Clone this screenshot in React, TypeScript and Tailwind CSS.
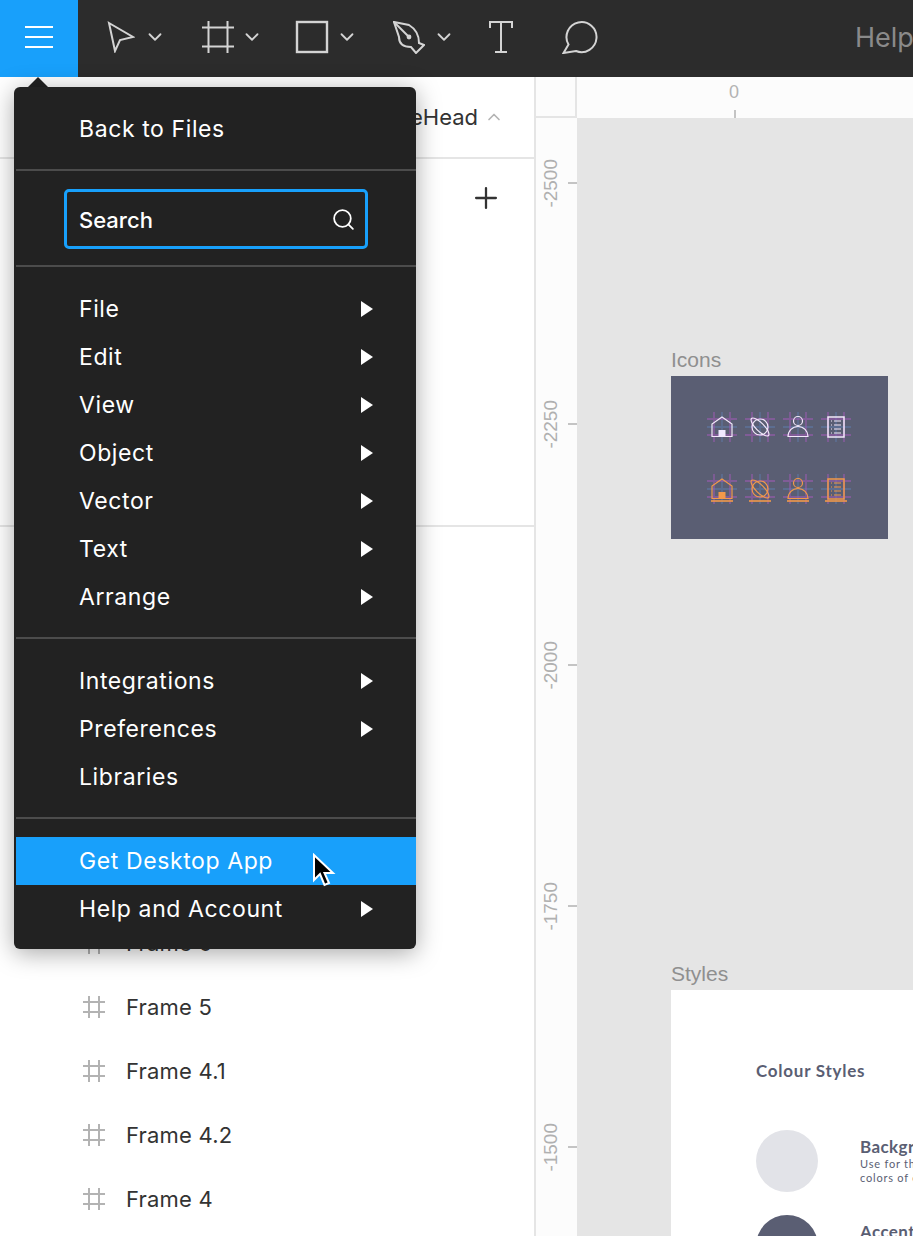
import { Search, Plus, ChevronUp, ChevronDown } from "lucide-react";

const menuGroups = [
  [
    { label: "File", sub: true },
    { label: "Edit", sub: true },
    { label: "View", sub: true },
    { label: "Object", sub: true },
    { label: "Vector", sub: true },
    { label: "Text", sub: true },
    { label: "Arrange", sub: true },
  ],
  [
    { label: "Integrations", sub: true },
    { label: "Preferences", sub: true },
    { label: "Libraries", sub: false },
  ],
];

const frames = ["Frame 6", "Frame 5", "Frame 4.1", "Frame 4.2", "Frame 4"];
const rulerMarks = ["-2500", "-2250", "-2000", "-1750", "-1500"];

const Caret = () => (
  <svg width="12" height="16" viewBox="0 0 12 16" className="shrink-0">
    <polygon points="0,0 12,8 0,16" fill="#fff" />
  </svg>
);

const Chevron = ({ className }: { className: string }) => (
  <ChevronDown className={className} size={22} strokeWidth={2} color="#d4d4d4" />
);

const MenuRow = ({ label, sub, active }: { label: string; sub?: boolean; active?: boolean }) => (
  <div className={`flex h-12 items-center justify-between pl-[63px] pr-[43px] ${active ? "bg-[#18a0fb]" : ""}`}>
    <span>{label}</span>
    {sub && <Caret />}
  </div>
);

const Divider = () => <div className="h-[2px] bg-[#4c4c4c]" />;

const HashIcon = () => (
  <svg width="24" height="24" viewBox="0 0 24 24" fill="none" stroke="#b3b3b3" strokeWidth="2" className="shrink-0">
    <path d="M7 1v22M17 1v22M1 7h22M1 17h22" />
  </svg>
);

// small grid of purple/blue keylines behind each sample icon
const Keylines = ({ cx, cy }: { cx: number; cy: number }) => (
  <g strokeWidth="1.8">
    <path d={`M${cx - 15} ${cy}h30M${cx} ${cy - 15}v30`} stroke="#5f7aa8" opacity="0.55" />
    <path
      d={`M${cx - 15} ${cy - 8}h30M${cx - 15} ${cy + 8}h30M${cx - 8} ${cy - 15}v30M${cx + 8} ${cy - 15}v30`}
      stroke="#a05bb5"
      opacity="0.55"
    />
  </g>
);

const SampleIcons = ({ cy, color, fill, underline }: { cy: number; color: string; fill: string; underline?: boolean }) => (
  <g>
    {[51, 89, 127, 165].map((cx) => (
      <Keylines key={cx} cx={cx} cy={cy} />
    ))}
    <g fill="none" stroke={color} strokeWidth="1.2">
      <path d={`M41 ${cy + 9.5}V${cy - 3}L51 ${cy - 10}L61 ${cy - 3}V${cy + 9.5}Z`} />
      <rect x="47.5" y={cy + 3} width="7" height="6.5" fill={fill} stroke="none" />
      <circle cx="89" cy={cy} r="8" />
      <ellipse cx="89" cy={cy} rx="12" ry="4" transform={`rotate(45 89 ${cy})`} />
      <circle cx="127" cy={cy - 6} r="4.5" />
      <path d={`M117 ${cy + 9.5}A10 10 0 0 1 137 ${cy + 9.5}Z`} />
      <rect x="157" y={cy - 10} width="16" height="20" strokeWidth="1.5" />
      {[-6, -2, 2, 6].map((d) => (
        <path key={d} d={`M160 ${cy + d}h1M163 ${cy + d}h7`} />
      ))}
    </g>
    {underline &&
      [51, 89, 127, 165].map((cx) => (
        <path key={cx} d={`M${cx - 11} ${cy + 12}h22`} stroke={color} strokeWidth="1.6" />
      ))}
  </g>
);

const App = () => {
  return (
    <div className="relative flex h-[1236px] w-[913px] flex-col overflow-hidden bg-white font-['Inter',sans-serif]">
      {/* Toolbar */}
      <header className="flex h-[77px] shrink-0 items-center bg-[#2c2c2c]">
        <div className="flex h-full w-[78px] shrink-0 flex-col items-center justify-center gap-[8px] bg-[#18a0fb] pr-[1px] pb-[4px]">
          <div className="h-[2px] w-[28px] bg-white" />
          <div className="h-[2px] w-[28px] bg-white" />
          <div className="h-[2px] w-[28px] bg-white" />
        </div>
        <div className="flex h-full flex-1 items-center pb-[3px]">
          <svg width="28" height="32" viewBox="0 0 28 32" fill="none" stroke="#d4d4d4" strokeWidth="2" className="ml-[29px] shrink-0">
            <path d="M2 2L26 16L13 19L8 30Z" />
          </svg>
          <Chevron className="ml-[9px] shrink-0" />
          <svg width="34" height="34" viewBox="0 0 34 34" fill="none" stroke="#d4d4d4" strokeWidth="2" className="ml-[35px] shrink-0">
            <path d="M7.5 1v32M26.5 1v32M1 7.5h32M1 26.5h32" />
          </svg>
          <Chevron className="ml-[6px] shrink-0" />
          <svg width="34" height="34" viewBox="0 0 34 34" fill="none" stroke="#d4d4d4" strokeWidth="2.4" className="ml-[32px] shrink-0">
            <rect x="2" y="2" width="30" height="30" />
          </svg>
          <Chevron className="ml-[7px] shrink-0" />
          <svg width="32" height="33" viewBox="0 0 32 33" fill="none" stroke="#d4d4d4" strokeWidth="2" className="ml-[35px] shrink-0">
            <path d="M1 1L16 4Q26 10 26 22L31 24L23 32L18 26Q6 26 6 16Z" />
            <path d="M1 1L15 15" />
            <circle cx="16" cy="16" r="2.4" fill="#d4d4d4" stroke="none" />
          </svg>
          <Chevron className="ml-[8px] shrink-0" />
          <svg width="26" height="34" viewBox="0 0 26 34" fill="none" stroke="#d4d4d4" strokeWidth="2" className="ml-[33px] shrink-0">
            <path d="M2 8V2H24V8M13 2V32M7 32H19" />
          </svg>
          <svg width="36" height="34" viewBox="0 0 36 34" fill="none" stroke="#d4d4d4" strokeWidth="2" className="ml-[48px] shrink-0">
            <path d="M1.5 33L6.5 24.5A15 15 0 1 1 14 31Z" />
          </svg>
          <span className="ml-[257px] mt-[2px] whitespace-nowrap text-[27px] text-[#8a8a8a]">Help</span>
        </div>
      </header>

      <div className="flex min-h-0 flex-1">
        {/* Left sidebar */}
        <aside className="flex w-[536px] shrink-0 flex-col border-r-2 border-[#e5e5e5] text-[#333]">
          <div className="flex h-[82px] shrink-0 items-center justify-end gap-[6px] border-b-2 border-[#e5e5e5] pr-[30px] text-[22px]">
            <span>eHead</span>
            <ChevronUp size={20} strokeWidth={2} color="#b3b3b3" />
          </div>
          <div className="h-[368px] shrink-0 border-b-2 border-[#e5e5e5] pt-[22px] pl-[469px]">
            <Plus size={34} strokeWidth={1.6} color="#333" />
          </div>
          <div className="pt-[384px]">
            {frames.map((name) => (
              <div key={name} className="flex h-16 items-center gap-[20px] pl-[82px] text-[22px] tracking-[0.2px]">
                <HashIcon />
                <span>{name}</span>
              </div>
            ))}
          </div>
        </aside>

        {/* Left ruler */}
        <div className="flex w-[41px] shrink-0 flex-col bg-[#fcfcfc]">
          <div className="h-[41px] shrink-0 border-r-2 border-b-2 border-[#e5e5e5]" />
          <div>
            {rulerMarks.map((mark) => (
              <div key={mark} className="flex h-[241px] items-center justify-between pl-[5px] text-[19px] leading-none text-[#b0b0b0] first:mt-[-55.5px]">
                <span className="rotate-180 font-['Liberation_Sans',sans-serif] [writing-mode:vertical-rl]">{mark}</span>
                <div className="h-[2px] w-[9px] bg-[#c4c4c4]" />
              </div>
            ))}
          </div>
        </div>

        {/* Canvas */}
        <main className="relative min-w-0 flex-1 bg-[#e5e5e5] font-['Liberation_Sans',sans-serif]">
          <div className="relative h-[41px] bg-[#fcfcfc]">
            <span className="absolute left-[152px] top-[2px] text-[18px] text-[#b3b3b3]">0</span>
            <div className="absolute bottom-0 left-[157px] h-[8px] w-[2px] bg-[#c4c4c4]" />
          </div>

          <span className="absolute left-[94px] top-[267px] text-[21px] text-[#8f8f8f]">Icons</span>
          <div className="absolute left-[94px] top-[299px] h-[163px] w-[217px] bg-[#5a5e73]">
            <svg width="217" height="163" viewBox="0 0 217 163">
              <SampleIcons cy={51} color="#f3e9fb" fill="#efe8ff" />
              <SampleIcons cy={113} color="#f2994a" fill="#f2994a" underline />
            </svg>
          </div>

          <span className="absolute left-[94px] top-[881px] text-[21px] text-[#8f8f8f]">Styles</span>
          <div className="absolute left-[94px] top-[913px] h-[260px] w-[300px] overflow-hidden bg-white font-['Lato',sans-serif] text-[#5a5e73]">
            <div className="ml-[85px] mt-[71px] whitespace-nowrap text-[17px] font-bold leading-5 tracking-[0.75px]">Colour Styles</div>
            <div className="ml-[85px] mt-[49px] flex items-start gap-[42px]">
              <div className="h-[62px] w-[62px] shrink-0 rounded-full bg-[#e2e3e8]" />
              <div className="whitespace-nowrap pt-[7px]">
                <div className="text-[17px] font-bold leading-5 tracking-[0.4px]">Background</div>
                <div className="text-[11px] leading-[14px] tracking-[0.8px]">Use for the background</div>
                <div className="text-[11px] leading-[14px] tracking-[0.8px]">colors of content</div>
              </div>
            </div>
            <div className="ml-[85px] mt-[23px] flex items-start gap-[42px]">
              <div className="h-[62px] w-[62px] shrink-0 rounded-full bg-[#5a5e73]" />
              <div className="pt-[7px] text-[17px] font-bold leading-5 tracking-[0.4px]">Accent</div>
            </div>
          </div>
        </main>
      </div>

      {/* Main menu popover */}
      <div className="absolute left-[28px] top-[77px] h-0 w-0 border-x-[10px] border-b-[10px] border-x-transparent border-b-[#222]" />
      <nav className="absolute left-[14px] top-[87px] w-[402px] rounded-[6px] bg-[#222] pl-[2px] text-[23px] leading-none tracking-[0.6px] text-white shadow-[0_4px_24px_rgba(0,0,0,0.35)]">
        <div className="flex h-[82px] items-center pl-[63px] pt-[2px]">Back to Files</div>
        <Divider />
        <div className="px-[48px] pt-[18px] pb-[16px]">
          <div className="flex h-[60px] items-center justify-between rounded-[5px] border-[3px] border-[#18a0fb] pl-[12px] pr-[9px] pt-[1px] text-[22px] font-medium tracking-normal">
            <span>Search</span>
            <Search size={25} strokeWidth={1.7} color="#fff" />
          </div>
        </div>
        <Divider />
        <div className="pt-[18px] pb-[16px]">
          {menuGroups[0].map((item) => (
            <MenuRow key={item.label} {...item} />
          ))}
        </div>
        <Divider />
        <div className="pt-[18px] pb-[16px]">
          {menuGroups[1].map((item) => (
            <MenuRow key={item.label} {...item} />
          ))}
        </div>
        <Divider />
        <div className="pt-[18px] pb-[16px]">
          <MenuRow label="Get Desktop App" active />
          <MenuRow label="Help and Account" sub />
        </div>
      </nav>

      {/* Mouse cursor */}
      <svg width="24" height="36" viewBox="0 0 24 36" className="absolute left-[312px] top-[853px]">
        <path d="M2 2V27L8 21L12.5 32L17 30L12.5 20H21Z" fill="#000" stroke="#fff" strokeWidth="2" />
      </svg>
    </div>
  );
};

export default App;
